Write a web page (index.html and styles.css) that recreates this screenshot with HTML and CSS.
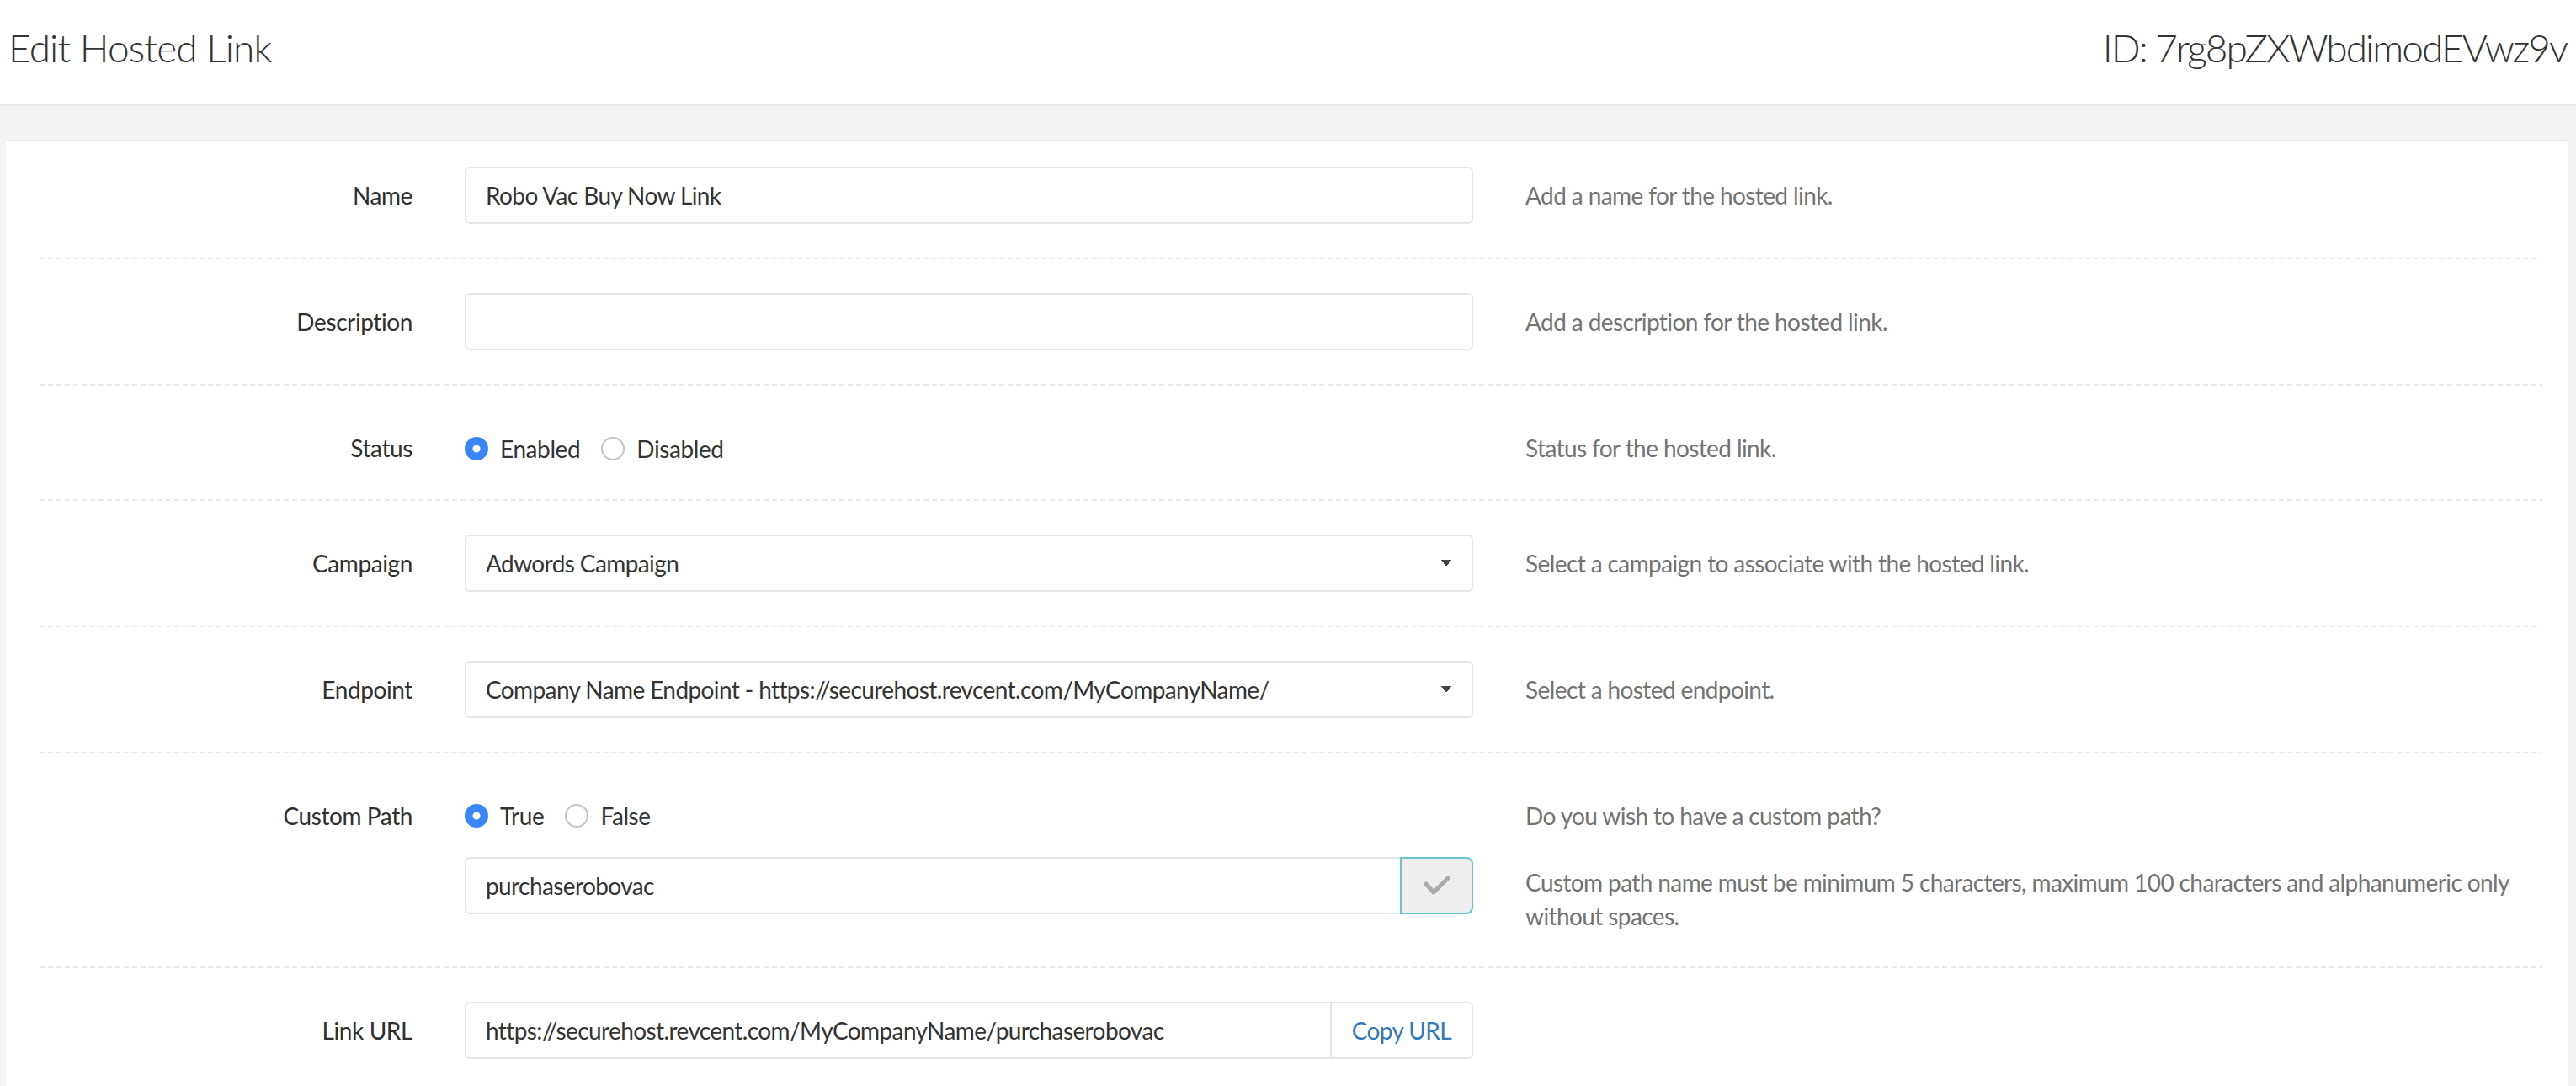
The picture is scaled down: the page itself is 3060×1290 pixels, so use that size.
FILE: index.html
```html
<!DOCTYPE html>
<html lang="en">
<head>
    <meta charset="UTF-8">
    <meta name="viewport" content="width=device-width, initial-scale=1.0">
    <title>Edit Hosted Link</title>
    <link rel="stylesheet" href="styles.css">
</head>
<body>
    <div class="page-header">
        <h2>Edit Hosted Link</h2>
        <h2 class="record-id">ID: 7rg8pZXWbdimodEVwz9v</h2>
    </div>

    <div class="wrapper">
        <div class="card">
            <form class="form-horizontal">
                <div class="form-row first">
                    <label class="row-label" for="name">Name</label>
                    <div class="row-control">
                        <input type="text" id="name" class="form-control" value="Robo Vac Buy Now Link">
                    </div>
                    <div class="row-help">Add a name for the hosted link.</div>
                </div>
                <div class="hr-dashed"></div>

                <div class="form-row">
                    <label class="row-label" for="description">Description</label>
                    <div class="row-control">
                        <input type="text" id="description" class="form-control" value="">
                    </div>
                    <div class="row-help">Add a description for the hosted link.</div>
                </div>
                <div class="hr-dashed"></div>

                <div class="form-row">
                    <label class="row-label">Status</label>
                    <div class="row-control">
                        <div class="radio-group">
                            <label class="radio-inline"><input type="radio" name="status" checked> Enabled</label>
                            <label class="radio-inline"><input type="radio" name="status"> Disabled</label>
                        </div>
                    </div>
                    <div class="row-help">Status for the hosted link.</div>
                </div>
                <div class="hr-dashed"></div>

                <div class="form-row">
                    <label class="row-label" for="campaign">Campaign</label>
                    <div class="row-control">
                        <select id="campaign" class="form-control">
                            <option>Adwords Campaign</option>
                        </select>
                    </div>
                    <div class="row-help">Select a campaign to associate with the hosted link.</div>
                </div>
                <div class="hr-dashed"></div>

                <div class="form-row">
                    <label class="row-label" for="endpoint">Endpoint</label>
                    <div class="row-control">
                        <select id="endpoint" class="form-control">
                            <option>Company Name Endpoint - https://securehost.revcent.com/MyCompanyName/</option>
                        </select>
                    </div>
                    <div class="row-help">Select a hosted endpoint.</div>
                </div>
                <div class="hr-dashed"></div>

                <div class="form-row">
                    <label class="row-label">Custom Path</label>
                    <div class="row-control">
                        <div class="radio-group spaced">
                            <label class="radio-inline"><input type="radio" name="custom" checked> True</label>
                            <label class="radio-inline"><input type="radio" name="custom"> False</label>
                        </div>
                        <div class="input-group">
                            <input type="text" class="form-control" value="purchaserobovac">
                            <button type="button" class="btn-check">
                                <svg width="32" height="24" viewBox="0 0 32 24">
                                    <polyline points="3,10 12,20 29,3" fill="none" stroke="#aaa" stroke-width="5" stroke-linecap="round" stroke-linejoin="round"/>
                                </svg>
                            </button>
                        </div>
                    </div>
                    <div class="row-help">
                        <p class="help-first">Do you wish to have a custom path?</p>
                        <p>Custom path name must be minimum 5 characters, maximum 100 characters and alphanumeric only without spaces.</p>
                    </div>
                </div>
                <div class="hr-dashed"></div>

                <div class="form-row">
                    <label class="row-label" for="linkurl">Link URL</label>
                    <div class="row-control">
                        <div class="input-group">
                            <input type="text" id="linkurl" class="form-control" value="https://securehost.revcent.com/MyCompanyName/purchaserobovac">
                            <span class="addon">Copy URL</span>
                        </div>
                    </div>
                    <div class="row-help"></div>
                </div>
            </form>
        </div>
    </div>
</body>
</html>
```

FILE: styles.css
```css
body {
    font-family: Lato, "Liberation Sans", sans-serif;
    font-size: 28px;
    letter-spacing: -0.4px;
    color: #333;
    background-color: #f3f3f4;
    margin: 0;
    padding: 0;
}
.page-header {
    display: flex;
    justify-content: space-between;
    align-items: center;
    height: 112px;
    padding: 0 11px 12px 10px;
    background-color: #fff;
    border-bottom: 2px solid #e7eaec;
}
.page-header h2 {
    margin: 0;
    font-size: 46px;
    font-weight: 300;
    letter-spacing: -0.9px;
    color: #333;
}
.page-header .record-id {
    letter-spacing: -2px;
}
.wrapper {
    padding: 40px 9px 0 7px;
}
.card {
    background-color: #fff;
    border-top: 2px solid #e7eaec;
    padding: 0 31px 40px 40px;
}
.form-row {
    display: grid;
    grid-template-columns: 443px 1198px 1fr;
    column-gap: 62px;
    padding: 40px 0;
}
.form-row.first {
    padding-top: 30px;
}
.row-label {
    text-align: right;
    padding-top: 14px;
    line-height: 40px;
    color: #2f2f2f;
}
.row-help {
    padding-top: 14px;
    line-height: 40px;
    letter-spacing: -0.6px;
    color: #737373;
}
.row-help p {
    margin: 0;
}
.row-help .help-first {
    margin-bottom: 39px;
}
.form-control {
    box-sizing: border-box;
    width: 100%;
    height: 68px;
    padding: 0 23px;
    font-family: inherit;
    font-size: 28px;
    letter-spacing: -0.6px;
    color: #333;
    background-color: #fff;
    border: 2px solid #e5e6e7;
    border-radius: 6px;
    outline: none;
}
select.form-control {
    appearance: none;
    -webkit-appearance: none;
    background-image: linear-gradient(to top right, transparent 50%, #444 50%), linear-gradient(to bottom right, #444 50%, transparent 50%);
    background-position: right 30px center, right 24px center;
    background-size: 6px 8px;
    background-repeat: no-repeat;
}
.radio-group {
    display: flex;
    align-items: center;
    padding-top: 14px;
    height: 41px;
}
.radio-group.spaced {
    height: 40px;
    margin-bottom: 29px;
}
.radio-inline {
    display: inline-flex;
    align-items: center;
    gap: 14px;
    margin-right: 25px;
    line-height: 40px;
}
.radio-inline input {
    appearance: none;
    -webkit-appearance: none;
    box-sizing: border-box;
    width: 28px;
    height: 28px;
    margin: 0;
    border: 2px solid #c4c4c4;
    border-radius: 50%;
    background-color: #fff;
}
.radio-inline input:checked {
    border: none;
    background: radial-gradient(circle, #fff 0 4px, #3a86f7 5px);
}
.input-group {
    display: flex;
}
.input-group .form-control {
    flex: 1;
    border-right: 0;
    border-radius: 6px 0 0 6px;
}
.btn-check {
    display: flex;
    align-items: center;
    justify-content: center;
    box-sizing: border-box;
    width: 87px;
    height: 68px;
    padding: 0;
    background-color: #eee;
    border: 2px solid #6cc3d1;
    border-radius: 0 8px 8px 0;
}
.addon {
    display: flex;
    align-items: center;
    box-sizing: border-box;
    height: 68px;
    padding: 0 24px;
    letter-spacing: -0.6px;
    color: #337ab7;
    background-color: #fff;
    border: 2px solid #e5e6e7;
    border-radius: 0 6px 6px 0;
}
.hr-dashed {
    height: 2px;
    background: repeating-linear-gradient(to right, #e7eaec 0 6px, transparent 6px 10px);
}
```
